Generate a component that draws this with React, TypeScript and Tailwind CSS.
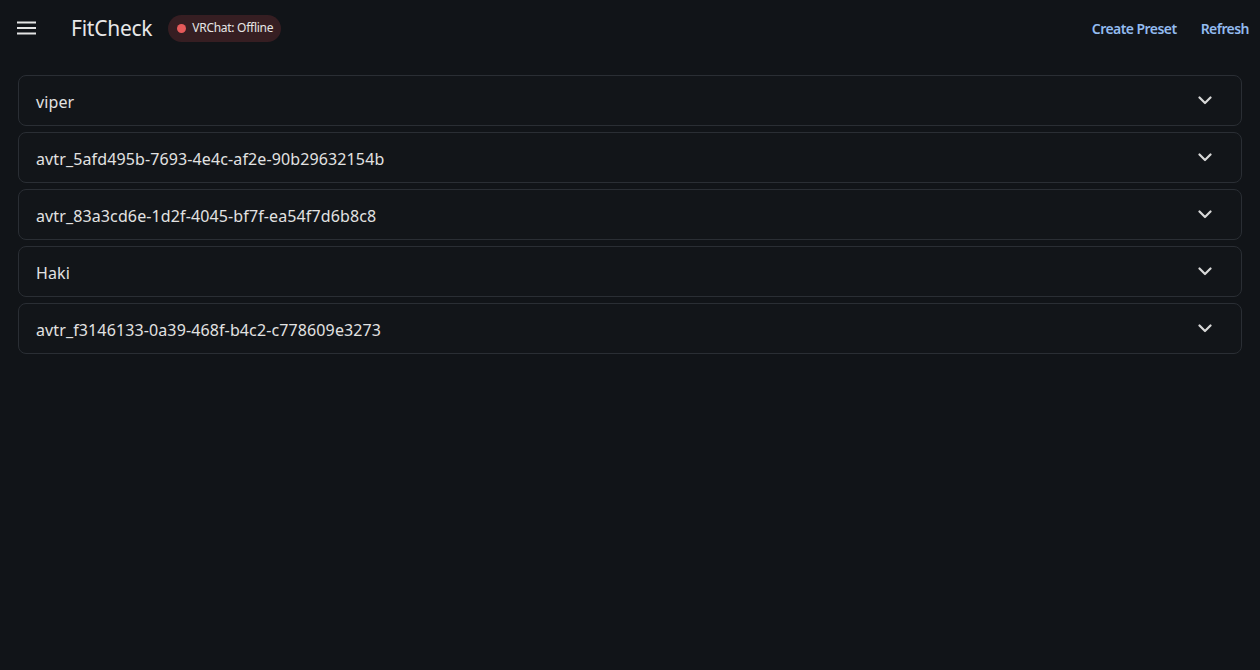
import React from "react";

const items = [
  "viper",
  "avtr_5afd495b-7693-4e4c-af2e-90b29632154b",
  "avtr_83a3cd6e-1d2f-4045-bf7f-ea54f7d6b8c8",
  "Haki",
  "avtr_f3146133-0a39-468f-b4c2-c778609e3273",
];

function Chevron() {
  return (
    <svg width="14" height="9" viewBox="0 0 14 9" fill="none">
      <path d="M1.5 1.5 L7 7 L12.5 1.5" stroke="#d8d8d8" strokeWidth="2.2" strokeLinecap="round" strokeLinejoin="round" />
    </svg>
  );
}

export default function App() {
  return (
    <div
      className="min-h-[670px] w-full bg-[#111418] text-[#e4e4e4]"
      style={{ fontFamily: '"Noto Sans", "Open Sans", sans-serif' }}
    >
      <header className="flex h-[56px] items-center justify-between pl-[17px] pr-[11px]">
        <div className="flex items-center">
          <svg width="20" height="14" viewBox="0 0 20 14" className="mr-[34px]">
            <rect x="0" y="0.5" width="19" height="2" fill="#e4e4e4" />
            <rect x="0" y="6" width="19" height="2" fill="#e4e4e4" />
            <rect x="0" y="11.5" width="19" height="2" fill="#e4e4e4" />
          </svg>
          <span className="text-[21px] leading-none text-[#e8e8e8] tracking-[-0.25px]">FitCheck</span>
          <div className="ml-[16px] flex h-[27px] items-center rounded-full bg-[#361e22] pl-[9px] pr-[8px]">
            <span className="mr-[6px] h-[9px] w-[9px] rounded-full bg-[#e65a5a]" />
            <span className="text-[12px] text-[#e6e6e6] tracking-[-0.28px]">VRChat: Offline</span>
          </div>
        </div>
        <div className="flex items-center gap-[24px] pt-[1px] text-[14px] font-semibold tracking-[-0.55px] text-[#93bbef]">
          <span>Create Preset</span>
          <span>Refresh</span>
        </div>
      </header>
      <main className="flex flex-col gap-[6px] px-[18px] pt-[19px]">
        {items.map((it) => (
          <div
            key={it}
            className="flex h-[51px] items-center justify-between rounded-[8px] border border-[#2a2e34] bg-[#121519] pl-[17px] pr-[29px]"
          >
            <span className="pt-[2px] text-[16px] tracking-[0.12px] text-[#e2e2e2]">{it}</span>
            <Chevron />
          </div>
        ))}
      </main>
    </div>
  );
}
